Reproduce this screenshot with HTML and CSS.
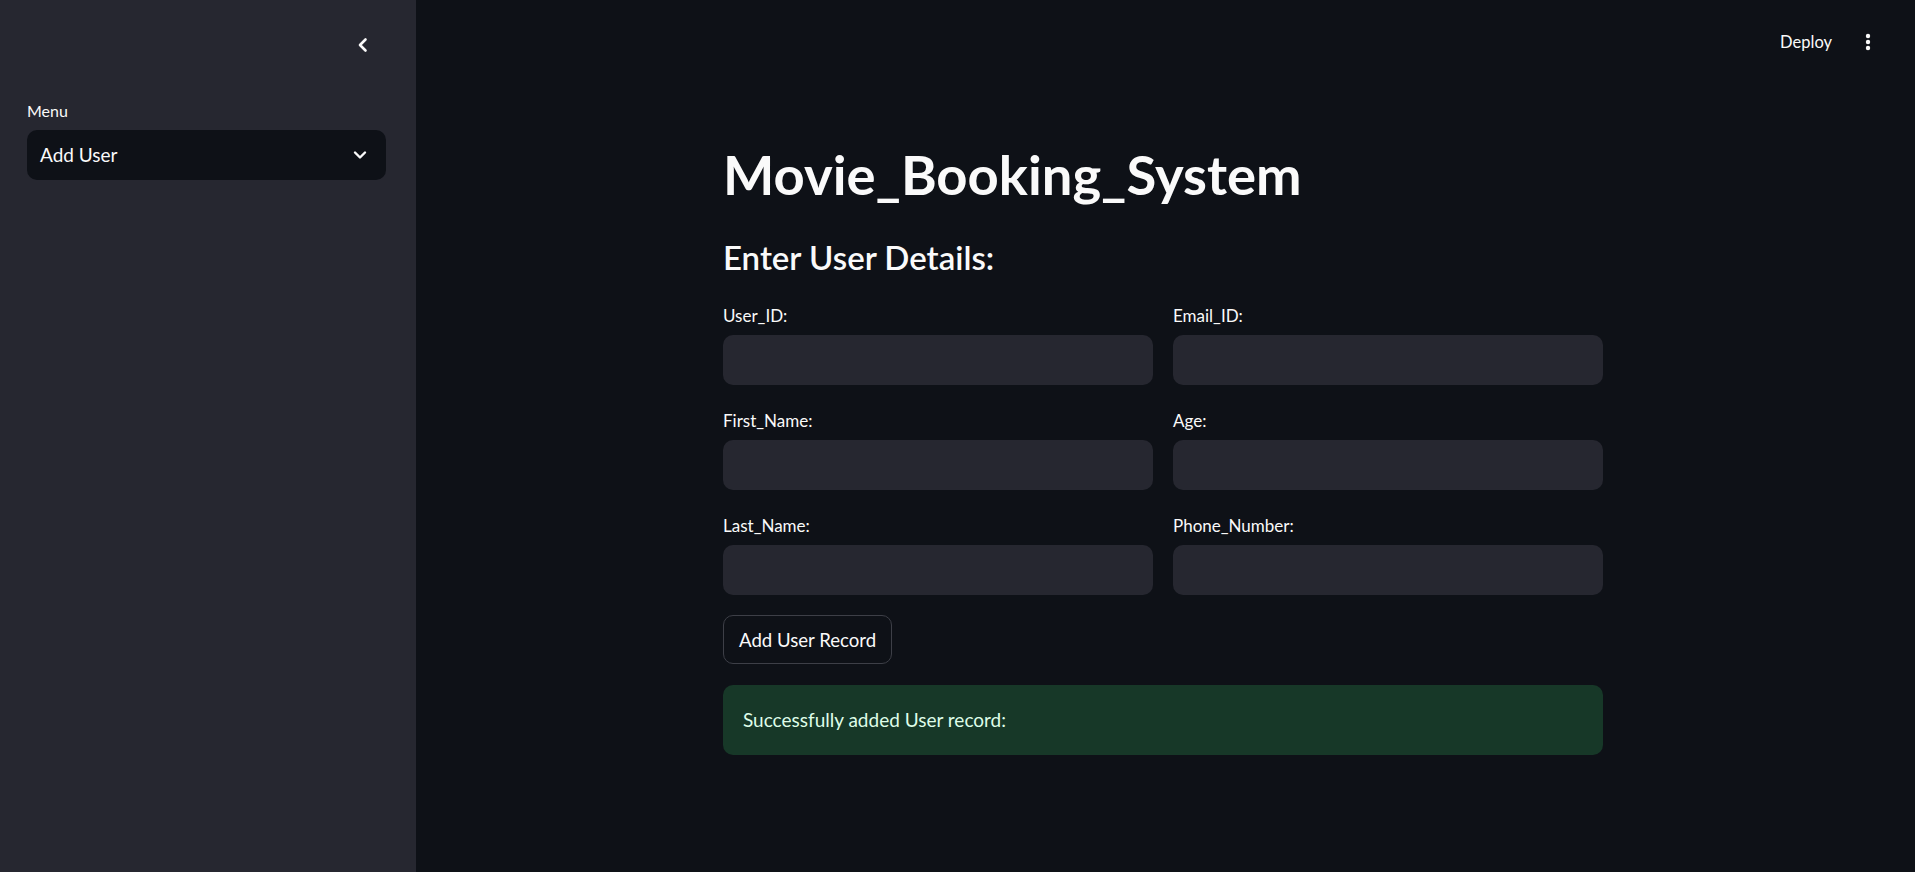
FILE: index.html
```html
<!DOCTYPE html>
<html lang="en">
<head>
<meta charset="utf-8">
<title>Movie_Booking_System</title>
<link rel="stylesheet" href="styles.css">
</head>
<body>
<div class="app">
  <aside class="sidebar">
    <div class="sidebar-head">
      <button class="icon-btn" aria-label="Collapse sidebar">
        <svg width="20" height="20" viewBox="0 0 20 20"><path d="M12.5 4.5 L7 10 L12.5 15.5" fill="none" stroke="#fafafa" stroke-width="2.6" stroke-linecap="round" stroke-linejoin="round"/></svg>
      </button>
    </div>
    <div class="menu-label">Menu</div>
    <div class="select">
      <span>Add User</span>
      <svg width="14" height="10" viewBox="0 0 14 10"><path d="M2 2.5 L7 7.5 L12 2.5" fill="none" stroke="#fafafa" stroke-width="2.4" stroke-linecap="round" stroke-linejoin="round"/></svg>
    </div>
  </aside>
  <main class="main">
    <header class="topbar">
      <span class="deploy">Deploy</span>
      <svg class="dots" width="6" height="18" viewBox="0 0 6 18"><circle cx="3" cy="3" r="2.2" fill="#fafafa"/><circle cx="3" cy="9" r="2.2" fill="#fafafa"/><circle cx="3" cy="15" r="2.2" fill="#fafafa"/></svg>
    </header>
    <section class="content">
      <h1 class="title">Movie_Booking_System</h1>
      <h2 class="subtitle">Enter User Details:</h2>
      <div class="form-grid">
        <div class="field"><label class="label">User_ID:</label><div class="input"></div></div>
        <div class="field"><label class="label">Email_ID:</label><div class="input"></div></div>
        <div class="field"><label class="label">First_Name:</label><div class="input"></div></div>
        <div class="field"><label class="label">Age:</label><div class="input"></div></div>
        <div class="field"><label class="label">Last_Name:</label><div class="input"></div></div>
        <div class="field"><label class="label">Phone_Number:</label><div class="input"></div></div>
      </div>
      <button class="btn">Add User Record</button>
      <div class="alert">Successfully added User record:</div>
    </section>
  </main>
</div>
</body>
</html>
```
FILE: styles.css
```css
* { box-sizing: border-box; }
html, body { margin: 0; padding: 0; height: 100%; }
body {
  font-family: "Lato", "Noto Sans", sans-serif;
  color: #fafafa;
  background: #0e1117;
}
.app { display: flex; height: 100vh; }
.sidebar {
  width: 416px;
  flex: 0 0 416px;
  background: #262730;
  padding: 0 30px 0 27px;
}
.sidebar-head {
  height: 90px;
  display: flex;
  align-items: center;
  justify-content: flex-end;
  padding-right: 13px;
}
.icon-btn {
  background: none; border: 0; padding: 0; width: 20px; height: 20px;
  display: flex; align-items: center; justify-content: center;
}
.menu-label {
  margin-top: 10px;
  font-size: 16px;
  line-height: 21px;
  margin-bottom: 9px;
}
.select {
  height: 50px;
  background: #0e1117;
  border-radius: 10px;
  display: flex;
  align-items: center;
  justify-content: space-between;
  padding: 0 19px 0 13px;
  font-size: 19px;
  line-height: 24px;
}
.main { flex: 1; background: #0e1117; }
.topbar {
  height: 84px;
  display: flex;
  align-items: center;
  justify-content: flex-end;
  padding-right: 44px;
  gap: 33px;
}
.deploy { font-size: 16.5px; line-height: 21px; }
.content { width: 880px; margin-left: 307px; padding-top: 57px; }
.title {
  margin: 0 0 29px;
  font-size: 54.4px;
  line-height: 66px;
  font-weight: 700;
}
.subtitle {
  margin: 0 0 27px;
  font-size: 33px;
  line-height: 42px;
  font-weight: 600;
}
.form-grid {
  display: grid;
  grid-template-columns: 1fr 1fr;
  column-gap: 20px;
  row-gap: 25px;
}
.label {
  display: block;
  font-size: 17px;
  line-height: 21px;
  margin-bottom: 9px;
}
.input {
  height: 50px;
  background: #262730;
  border-radius: 10px;
}
.btn {
  margin-top: 20px;
  height: 49px;
  padding: 0 15px;
  background: #0e1117;
  color: #fafafa;
  border: 1px solid #3d3f47;
  border-radius: 10px;
  font-family: inherit;
  font-size: 18.6px;
  line-height: 24px;
  display: block;
}
.alert {
  margin-top: 21px;
  height: 70px;
  background: #173828;
  color: #dffde9;
  border-radius: 10px;
  padding: 0 20px;
  display: flex;
  align-items: center;
  font-size: 19px;
  line-height: 24px;
}
```
